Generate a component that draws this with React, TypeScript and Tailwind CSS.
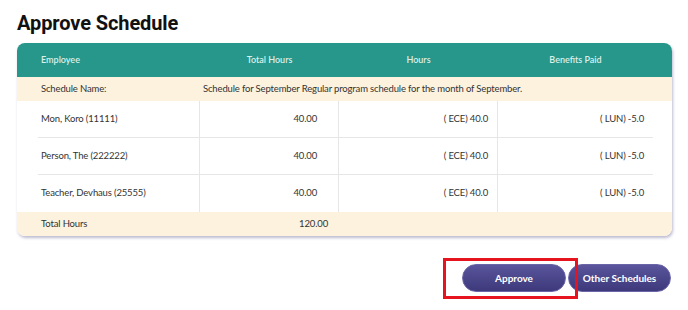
import React from 'react';

const rows = [
  { name: 'Mon, Koro (11111)', total: '40.00', hours: '( ECE) 40.0', benefits: '( LUN) -5.0' },
  { name: 'Person, The (222222)', total: '40.00', hours: '( ECE) 40.0', benefits: '( LUN) -5.0' },
  { name: 'Teacher, Devhaus (25555)', total: '40.00', hours: '( ECE) 40.0', benefits: '( LUN) -5.0' },
];

const cols = 'grid grid-cols-[162px_139px_159px_1fr]';

export default function App() {
  return (
    <div className="relative w-[688px] h-[310px] bg-white px-[17px] pt-[10px] font-['Lato','Noto_Sans',sans-serif] text-[#333]">
      <h1 className="text-[20px] leading-[26px] font-bold text-[#111] font-['Roboto','Liberation_Sans',sans-serif] tracking-[-0.1px]">
        Approve Schedule
      </h1>

      <div className="mt-[7px] w-[655px] bg-white rounded-[8px] shadow-[1px_2px_3px_rgba(90,85,140,0.4)] overflow-hidden">
        {/* header */}
        <div className={`${cols} h-[34px] bg-[#26978a] pl-[21px] pr-[19px] items-center text-[9px] font-semibold text-[#dcefe9]`}>
          <div className="pl-[3px]">Employee</div>
          <div className="text-center">Total Hours</div>
          <div className="text-center">Hours</div>
          <div className="text-center">Benefits Paid</div>
        </div>

        {/* schedule name */}
        <div className={`${cols} h-[24px] bg-[#fcf2de] pl-[21px] pr-[19px] items-center text-[9.5px] tracking-[-0.15px]`}>
          <div className="pl-[3px]">Schedule Name:</div>
          <div className="col-span-3 pl-[3px] whitespace-nowrap">
            Schedule for September Regular program schedule for the month of September.
          </div>
        </div>

        {/* employees */}
        <div className="pl-[21px] pr-[19px]">
          {rows.map((r, i) => (
            <div
              key={r.name}
              className={`${cols} h-[37px] items-stretch text-[9.5px] tracking-[-0.15px] ${i < rows.length - 1 ? 'border-b border-[#e6e6e6]' : ''}`}
            >
              <div className="flex items-center pl-[3px] border-r border-[#e6e6e6]">{r.name}</div>
              <div className="flex items-center justify-end pr-[21px] border-r border-[#e6e6e6]">{r.total}</div>
              <div className="flex items-center justify-end pr-[9px] border-r border-[#e6e6e6]">{r.hours}</div>
              <div className="flex items-center justify-end pr-[9px]">{r.benefits}</div>
            </div>
          ))}
        </div>

        {/* total */}
        <div className={`${cols} h-[24px] bg-[#fcf2de] pl-[21px] pr-[19px] items-center text-[9.5px] tracking-[-0.15px]`}>
          <div className="pl-[3px]">Total Hours</div>
          <div className="text-right pr-[11px]">120.00</div>
          <div />
          <div />
        </div>
      </div>

      {/* actions */}
      <div className="mt-[28px] w-[655px] flex justify-end gap-[2px] pr-[1px]">
        <button className="w-[104px] h-[28px] rounded-full bg-gradient-to-b from-[#5a559c] to-[#3d397b] border border-[#6a65a8] text-white text-[10px] font-bold">
          Approve
        </button>
        <button className="w-[103px] h-[28px] rounded-full bg-gradient-to-b from-[#5a559c] to-[#3d397b] border border-[#6a65a8] text-white text-[10px] font-bold">
          Other Schedules
        </button>
      </div>

      {/* highlight annotation */}
      <div className="absolute left-[443px] top-[258px] w-[135px] h-[41px] border-[3px] border-[#e5141e] pointer-events-none" />
    </div>
  );
}
